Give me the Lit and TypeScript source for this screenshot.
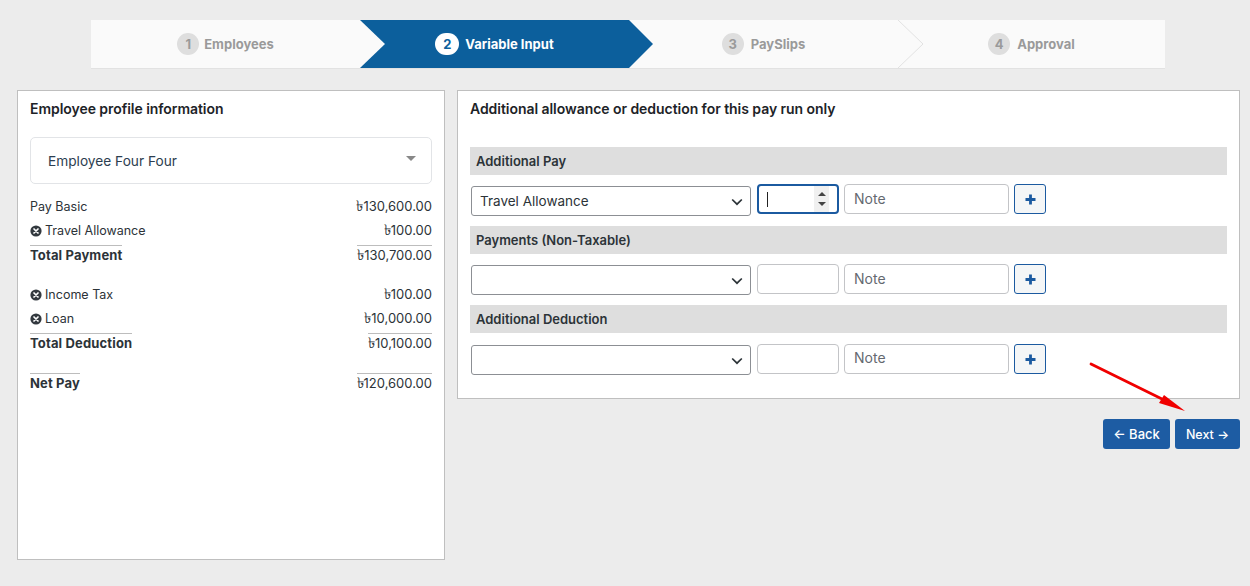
import { LitElement, html, css, svg } from "lit";
import { customElement } from "lit/decorators.js";

const chevron = svg`<path d="M1.2 1.5 L6 6.2 L10.8 1.5" fill="none" stroke="#2c3338" stroke-width="1.7"/>`;

@customElement("app-root")
export class AppRoot extends LitElement {
  static styles = css`
    :host { display: block; width: 1250px; height: 586px; background: #ececec; position: relative; overflow: hidden;
      font-family: Inter, "Noto Sans", sans-serif; font-size: 13px; color: #2c3338; }
    * { box-sizing: border-box; }
    .page { padding: 20px 10px 0 17px; }
    .steps { display: grid; grid-template-columns: 269px 269px 269px 1fr; width: 1074px; height: 49px; margin-left: 74px;
      background: #fafafa; border-bottom: 1px solid #e2e2e2; }
    .step { position: relative; display: flex; align-items: center; justify-content: center; gap: 7px;
      font-size: 13px; font-weight: 700; color: #9a9a9a; height: 48px; }
    .num { display: flex; align-items: center; justify-content: center; height: 22px; min-width: 22px; padding: 0 6.5px;
      border-radius: 11px; background: #dedede; color: #9a9a9a; font-size: 13px; font-weight: 700; }
    .step.n1 { gap: 5px; }
    .step.n1 .num { padding: 0; }
    .step.active { color: #fff; background: #0c5f9c; gap: 6px; z-index: 1; }
    .step.active .num { background: #fff; color: #0c5f9c; min-width: 24px; padding: 0; }
    .step .tip { position: absolute; top: 0; left: 100%; width: 25px; height: 48px; z-index: 2; }
    .columns { display: grid; grid-template-columns: 428px 783px; gap: 12px; margin-top: 21px; align-items: start; }
    .panel { background: #fff; border: 1px solid #bfbfbf; padding: 9px 12px; }
    .left { height: 470px; }
    .right { height: 309px; }
    h2 { margin: 0; font-size: 14px; line-height: 17px; font-weight: 600; color: #1d2327; letter-spacing: -0.05px; }
    .emp { display: flex; align-items: center; justify-content: space-between; height: 47px; margin-top: 20px;
      padding: 0 15px 0 17px; border: 1px solid #e2e4e7; border-radius: 5px; font-size: 13.7px; color: #2c3e50; }
    .caret { width: 0; height: 0; border: 5px solid transparent; border-top-color: #888; border-bottom: 0; margin-top: -5px; }
    .rows { margin-top: 9px; }
    .row { display: flex; justify-content: space-between; align-items: flex-end; height: 24px; line-height: 22px; }
    .row .label { display: flex; align-items: center; gap: 3px; font-size: 12.5px; height: 22px; margin-bottom: -1px; }
    .row svg { width: 12px; height: 12px; flex: none; }
    .row.total { height: 25px; }
    .row.total .label, .row.total .amt { border-top: 1px solid #bdbdbd; line-height: 18px; height: 21px; margin-bottom: 0; }
    .row.total .label { display: block; font-size: 13px; font-weight: 700; letter-spacing: .15px; }
    .cur { font-size: 15px; line-height: 0; }
    .gap1 { margin-top: 15px; }
    .gap2 { margin-top: 15px; }
    .bar { height: 28px; line-height: 29px; padding-left: 6px; background: #dedede; font-weight: 600; font-size: 13px; color: #2c3338; }
    .sections { margin-top: 30px; }
    .form { display: grid; grid-template-columns: 281px 82px 165px 32px; column-gap: 5px; padding: 10px 0 0 1px; height: 51px; }
    .form.third { padding-top: 11px; }
    .form.third input { padding-bottom: 4px; }
    .form.first .num-in, .form.first input, .form.first .plus { margin-top: -1px; }
    .sel { position: relative; height: 30px; margin: 1px 1px 0 0; }
    select { appearance: none; width: 100%; height: 30px; border: 1px solid #8c8f94; border-radius: 3px; background: #fff;
      font: 13.5px Inter, "Noto Sans", sans-serif; color: #2c3338; padding: 0 24px 0 8px; }
    .chev { position: absolute; right: 8px; top: 12px; width: 12px; height: 8px; }
    .num-in { position: relative; height: 30px; border: 1px solid #c3c4c7; border-radius: 4px; background: #fff; }
    .num-in.focus { border: 2px solid #1b5aa0; }
    .cursor { position: absolute; left: 8px; top: 6px; width: 1px; height: 15px; background: #222; }
    .spin { position: absolute; right: 8px; top: 0; bottom: 0; width: 15px; background: #f0f0f0; display: flex; flex-direction: column; align-items: center; justify-content: space-around; padding: 3px 0; }
    .up, .dn { width: 0; height: 0; border-left: 4px solid transparent; border-right: 4px solid transparent; }
    .up { border-bottom: 4px solid #444; }
    .dn { border-top: 4px solid #444; }
    input { width: 100%; height: 30px; border: 1px solid #c3c4c7; border-radius: 4px; padding: 0 9px 2px; font: 14px Inter, "Noto Sans", sans-serif; color: #2c3338; background: #fff; }
    input::placeholder { color: #646970; opacity: 1; }
    .plus { height: 30px; border: 1px solid #1b5aa0; border-radius: 3px; background: #f4f6f7; display: flex; align-items: center; justify-content: center; padding: 0; }
    .plus svg { width: 11px; height: 11px; }
    .actions { display: flex; justify-content: flex-end; gap: 5px; margin-top: 20px; }
    .btn { height: 30px; border: 0; border-radius: 3px; background: #1d5ca3; color: #fff; font: 500 13px Inter, "Noto Sans", sans-serif; padding: 0; }
    .back { width: 67px; }
    .next { width: 65px; font-size: 12.5px; }
    .arrow { position: absolute; left: 1085px; top: 358px; width: 105px; height: 58px; pointer-events: none; }
  `;

  private x() {
    return html`<svg viewBox="0 0 12 12"><circle cx="6" cy="6" r="5.6" fill="#33393f"/><path d="M4 4l4 4M8 4l-4 4" stroke="#fff" stroke-width="1.7" stroke-linecap="round"/></svg>`;
  }

  private row(label: string, amt: string, icon = false, extra = "") {
    return html`<div class="row ${extra}"><span class="label">${icon ? this.x() : ""}${label}</span><span class="amt"><span class="cur">৳</span>${amt}</span></div>`;
  }

  private form(value: string, cls = "", focus = false) {
    return html`<div class="form ${cls}">
      <div class="sel">
        <select><option>${value}</option></select>
        <svg class="chev" viewBox="0 0 12 8">${chevron}</svg>
      </div>
      <div class="num-in ${focus ? "focus" : ""}">
        ${focus ? html`<div class="cursor"></div><div class="spin"><div class="up"></div><div class="dn"></div></div>` : ""}
      </div>
      <input placeholder="Note" />
      <button class="plus"><svg viewBox="0 0 11 11"><path d="M5.5 .5v10M.5 5.5h10" stroke="#1b5aa0" stroke-width="2.8"/></svg></button>
    </div>`;
  }

  render() {
    return html`<div class="page">
      <div class="steps">
        <div class="step n1"><span class="num">1</span>Employees
          <svg class="tip" viewBox="0 0 25 48"><path d="M0 0L25 24L0 48Z" fill="#fafafa"/></svg></div>
        <div class="step active"><span class="num">2</span>Variable Input
          <svg class="tip" viewBox="0 0 25 48"><path d="M0 0L24 24L0 48Z" fill="#0c5f9c"/></svg></div>
        <div class="step"><span class="num">3</span>PaySlips
          <svg class="tip" viewBox="0 0 25 48"><path d="M0 0L25 24L0 48" fill="#fafafa" stroke="#e2e2e2"/></svg></div>
        <div class="step"><span class="num">4</span>Approval</div>
      </div>
      <div class="columns">
        <div>
          <section class="panel left">
            <h2>Employee profile information</h2>
            <div class="emp"><span>Employee Four Four</span><span class="caret"></span></div>
            <div class="rows">
              ${this.row("Pay Basic", "130,600.00")}
              ${this.row("Travel Allowance", "100.00", true)}
              ${this.row("Total Payment", "130,700.00", false, "total")}
              <div class="gap1"></div>
              ${this.row("Income Tax", "100.00", true)}
              ${this.row("Loan", "10,000.00", true)}
              ${this.row("Total Deduction", "10,100.00", false, "total")}
              <div class="gap2"></div>
              ${this.row("Net Pay", "120,600.00", false, "total")}
            </div>
          </section>
        </div>
        <div>
          <section class="panel right">
            <h2>Additional allowance or deduction for this pay run only</h2>
            <div class="sections">
              <div class="bar">Additional Pay</div>
              ${this.form("Travel Allowance", "first", true)}
              <div class="bar">Payments (Non-Taxable)</div>
              ${this.form("")}
              <div class="bar">Additional Deduction</div>
              ${this.form("", "third")}
            </div>
          </section>
          <div class="actions">
            <button class="btn back">← Back</button>
            <button class="btn next">Next →</button>
          </div>
        </div>
      </div>
      <svg class="arrow" viewBox="0 0 105 58"><path d="M6 6L77 41" stroke="#f00000" stroke-width="2.8" stroke-linecap="round"/><path d="M100 53L74 45L79 37Z" fill="#f00000"/></svg>
    </div>`;
  }
}
